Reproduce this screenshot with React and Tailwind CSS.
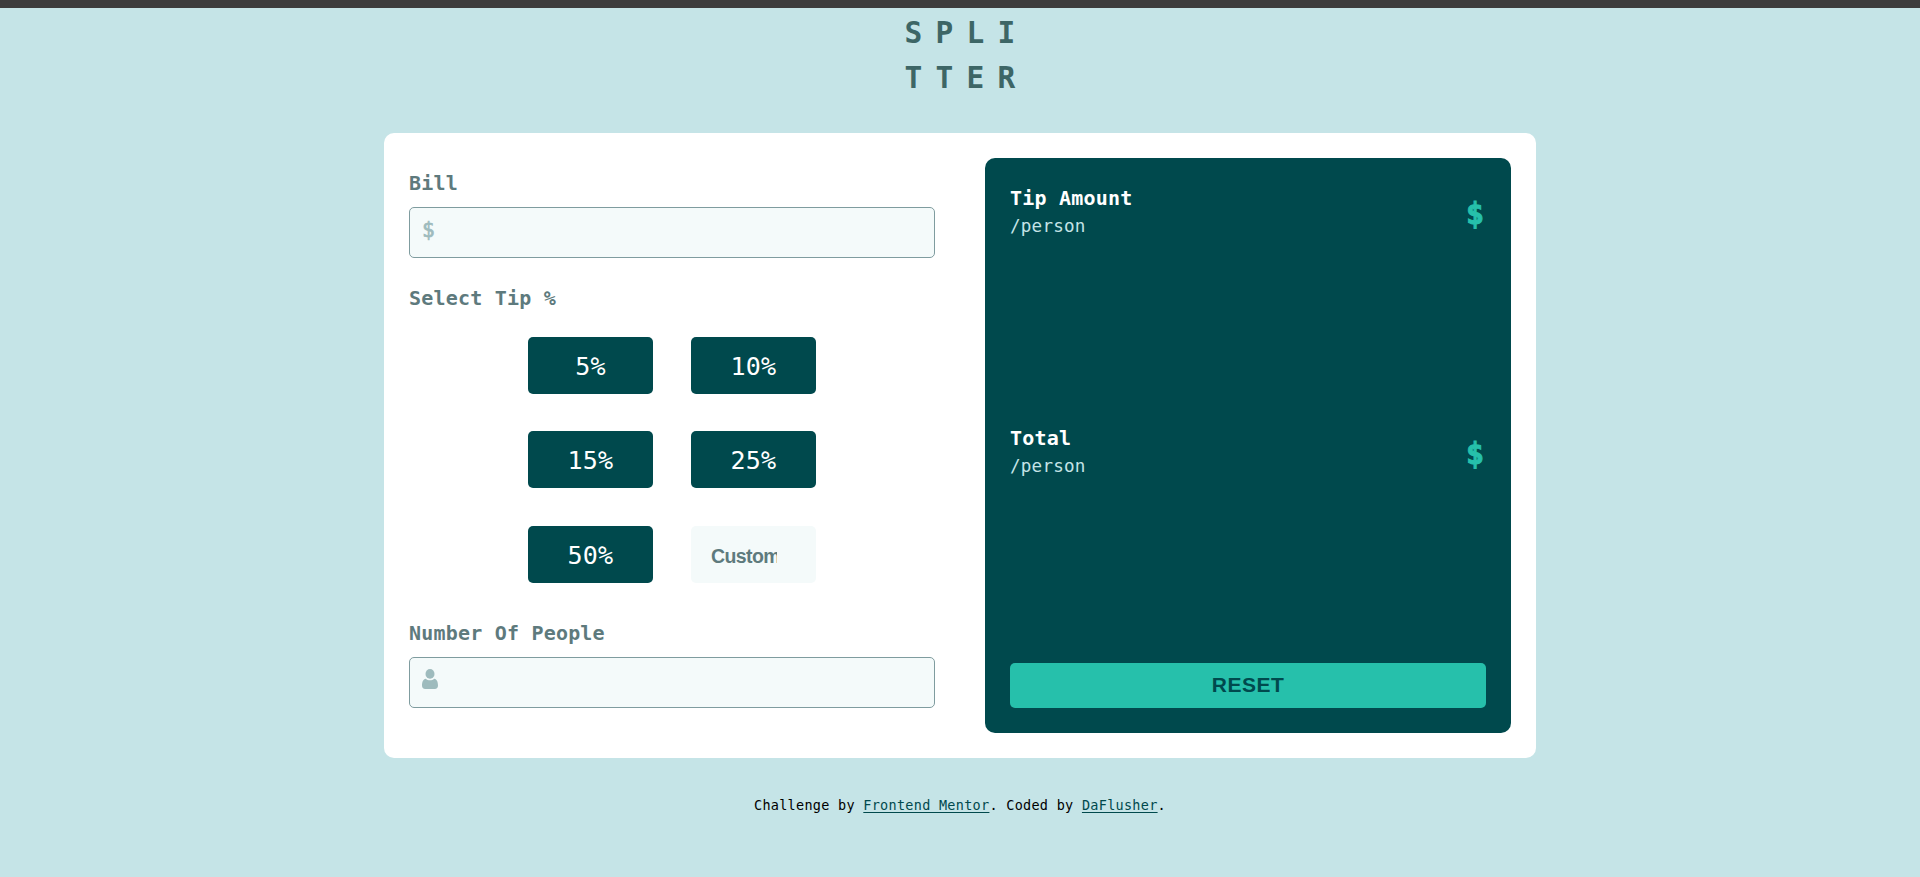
const mono = "font-['DejaVu_Sans_Mono',monospace]";
const sans = "font-['Liberation_Sans',sans-serif]";

function Label({ children, className = '' }) {
  return (
    <div className={`text-[20px] leading-[30px] font-bold tracking-[0.2px] text-[#5e7a7d] ${className}`}>{children}</div>
  );
}

function Field({ children }) {
  return (
    <div className="flex h-[51px] rounded-[5px] border border-[#7f9c9f] bg-[#f4fafa] pt-[11px] pl-3">
      {children}
    </div>
  );
}

function Amount({ title }) {
  return (
    <div className="flex h-[240px] items-start justify-between">
      <div>
        <div className="pt-px text-[20px] leading-[29px] font-bold tracking-[0.2px] text-white">{title}</div>
        <div className="text-[17.6px] leading-[27px] tracking-[0.2px] text-[#c5e4e7]">/person</div>
      </div>
      <div className="mt-[11px] pr-[2px] text-[30px] leading-[40px] font-bold text-[#26c0ab] [-webkit-text-stroke:1px_#26c0ab]">$</div>
    </div>
  );
}

export default function App() {
  return (
    <div className={`${mono} flex h-[877px] w-full flex-col items-center overflow-hidden border-t-8 border-[#3d3d3d] bg-[#c5e4e7]`}>
      <div className="h-[125px] pt-[3px] pl-[13px] text-[29.5px] leading-[45px] font-bold tracking-[13.2px] text-[#3d6666]">
        <div>SPLI</div>
        <div>TTER</div>
      </div>

      <main className="flex h-[625px] w-[1152px] shrink-0 gap-[50px] rounded-[10px] bg-white p-[25px]">
        <section className="flex w-[526px] flex-col">
          <Label className="mt-[10px] mb-[9px]">Bill</Label>
          <Field>
            <span className="-mt-px text-[21px] leading-[24px] text-[#9ebbbd] [-webkit-text-stroke:0.7px_#9ebbbd]">$</span>
          </Field>
          <Label className="mt-[25px] mb-[24px]">Select Tip %</Label>
          <div className="grid grid-cols-[125px_125px] gap-x-[38px] gap-y-[37.4px] self-center">
            {['5%', '10%', '15%', '25%', '50%'].map((tip) => (
              <button key={tip} className="h-[57px] rounded-[5px] bg-[#00494d] pt-[2px] text-[25px] tracking-[0.2px] text-white">
                {tip}
              </button>
            ))}
            <div className="flex h-[57px] items-center rounded-[5px] bg-[#f4fafa] px-5">
              <span className={`${sans} w-[66px] overflow-hidden pt-[3px] text-[19.5px] leading-[30px] font-bold tracking-[-0.6px] text-[#5e7a7d]`}>Custom</span>
            </div>
          </div>
          <Label className="mt-[35px] mb-[9px]">Number Of People</Label>
          <Field>
            <svg width="16" height="20" viewBox="0 0 16 20" fill="#9ebbbd">
              <ellipse cx="8" cy="4.9" rx="4.5" ry="4.9" />
              <path d="M3.8 9.7C5 10.7 6.3 11.3 8 11.3s3-.6 4.200-1.600C15 10.200 16 13.200 16 16.500 16 18.800 14.800 20 12.800 20H3.200C1.200 20 0 18.800 0 16.500 0 13.200 1 10.200 3.800 9.700Z" />
            </svg>
          </Field>
        </section>

        <section className="flex w-[526px] flex-col rounded-[10px] bg-[#00494d] p-[25px]">
          <Amount title="Tip Amount" />
          <Amount title="Total" />
          <button className={`${sans} mt-auto h-[45px] rounded-[5px] bg-[#26c0ab] pb-[2px] text-[21px] font-bold tracking-[0.5px] text-[#00494d]`}>
            RESET
          </button>
        </section>
      </main>

      <footer className="mt-[37px] text-[13.5px] leading-[20px] tracking-[0.28px] text-black">
        Challenge by <a className="text-[#00494d] underline underline-offset-2">Frontend Mentor</a>. Coded by{' '}
        <a className="text-[#00494d] underline underline-offset-2">DaFlusher</a>.
      </footer>
    </div>
  );
}
